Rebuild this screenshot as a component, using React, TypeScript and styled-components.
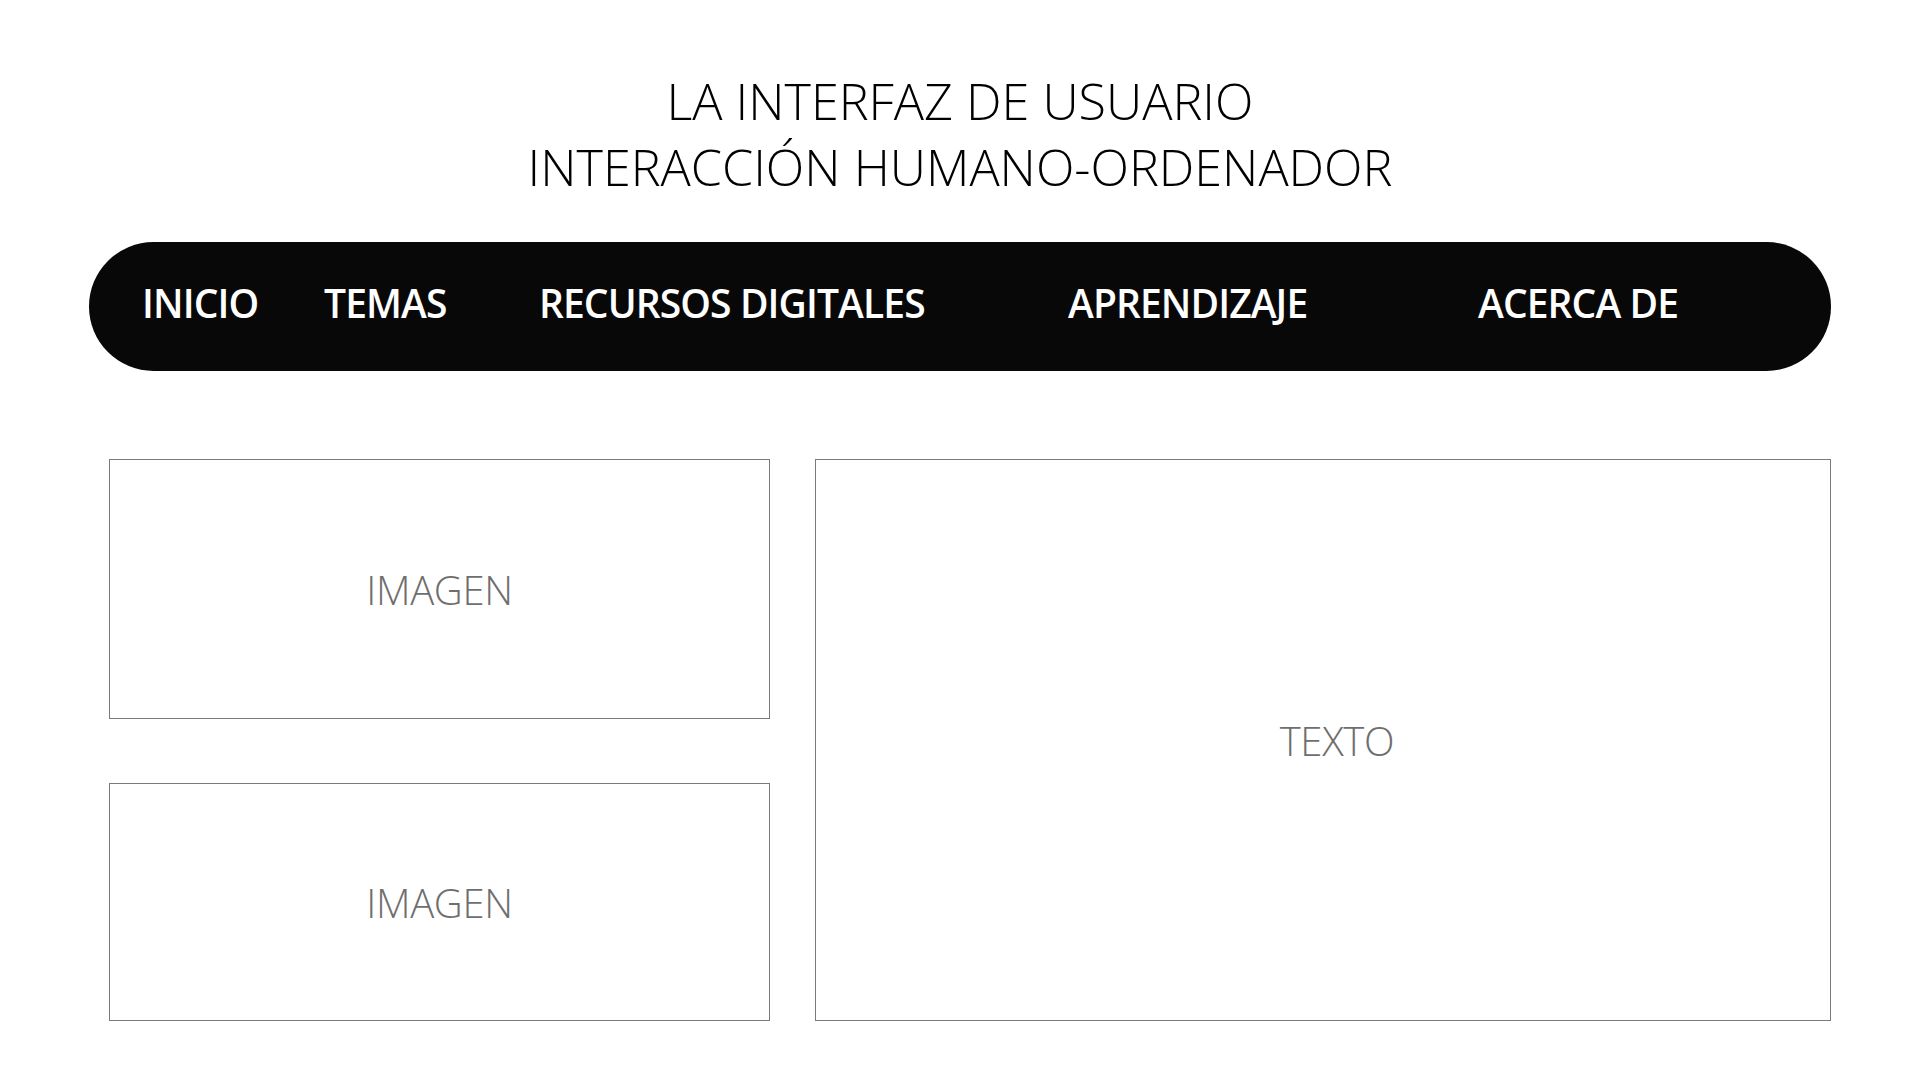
import React from "react";
import styled, { createGlobalStyle } from "styled-components";

const GlobalStyle = createGlobalStyle`
  html, body {
    margin: 0;
    padding: 0;
    background: #ffffff;
  }
  body {
    font-family: "Open Sans", "Noto Sans", sans-serif;
  }
`;

const Page = styled.div`
  width: 1920px;
  height: 1080px;
  box-sizing: border-box;
  padding: 68px 89px 0;
  display: flex;
  flex-direction: column;
  overflow: hidden;
`;

const Title = styled.h1`
  margin: 0;
  text-align: center;
  font-weight: 300;
  font-size: 50.3px;
  line-height: 66px;
  color: #000;
`;

const NavBar = styled.nav`
  margin-top: 42px;
  height: 129px;
  box-sizing: border-box;
  padding: 0 0 8px 53px;
  background: #080808;
  border-radius: 65px;
  display: grid;
  grid-template-columns: 182px 215px 529px 410px auto;
  align-items: center;
`;

const NavItem = styled.a`
  color: #ffffff;
  font-size: 39px;
  font-weight: 600;
  text-decoration: none;
  white-space: nowrap;
  letter-spacing: -0.9px;
`;

const Content = styled.div`
  margin: 88px 0 0 20px;
  display: grid;
  grid-template-columns: 661px 1016px;
  grid-template-rows: 260px 238px;
  column-gap: 45px;
  row-gap: 64px;
`;

const Placeholder = styled.div<{ $tall?: boolean; $shift?: number }>`
  border: 1.5px solid #7a7a7a;
  box-sizing: border-box;
  display: flex;
  align-items: center;
  justify-content: center;
  padding-left: ${(p) => p.$shift ?? 0}px;
  grid-row: ${(p) => (p.$tall ? "1 / span 2" : "auto")};
  grid-column: ${(p) => (p.$tall ? "2" : "1")};
  color: #6e6e6e;
  font-size: 40px;
  font-weight: 300;
  letter-spacing: -0.3px;
`;

const links = ["INICIO", "TEMAS", "RECURSOS DIGITALES", "APRENDIZAJE", "ACERCA DE"];

export default function App() {
  return (
    <>
      <GlobalStyle />
      <Page>
        <Title>
          LA INTERFAZ DE USUARIO
          <br />
          INTERACCIÓN HUMANO-ORDENADOR
        </Title>
        <NavBar>
          {links.map((l) => (
            <NavItem key={l} href="#">
              {l}
            </NavItem>
          ))}
        </NavBar>
        <Content>
          <Placeholder>IMAGEN</Placeholder>
          <Placeholder $tall $shift={28}>
            TEXTO
          </Placeholder>
          <Placeholder>IMAGEN</Placeholder>
        </Content>
      </Page>
    </>
  );
}
